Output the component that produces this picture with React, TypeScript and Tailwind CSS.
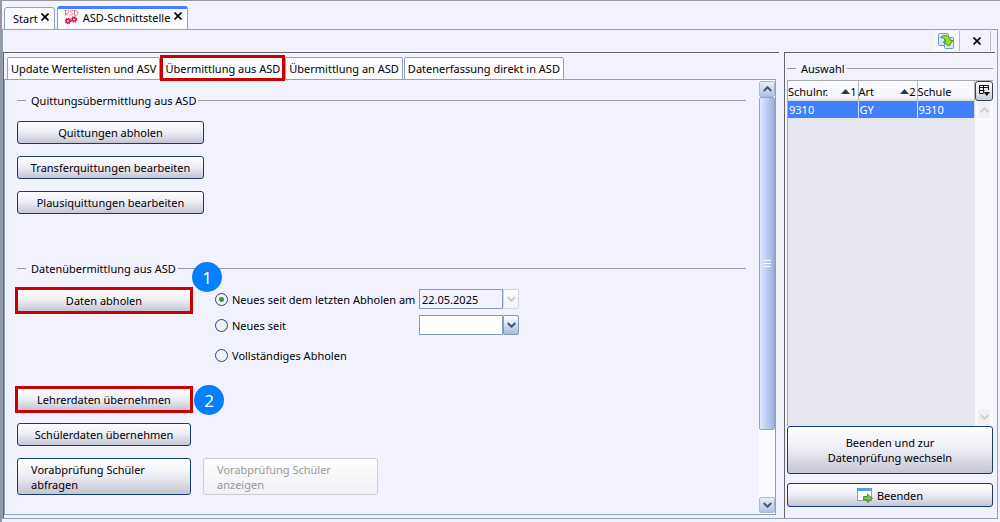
import type { ReactNode } from 'react'
import clsx from 'clsx'

const tabs = ['Update Wertelisten und ASV', 'Übermittlung aus ASD', 'Übermittlung an ASD', 'Datenerfassung direkt in ASD']

const columns = [
  { label: 'Schulnr.', sort: '1' },
  { label: 'Art', sort: '2' },
  { label: 'Schule', sort: '' },
]

const rows = [['9310', 'GY', '9310']]

function AsdIcon() {
  return (
    <svg width="15" height="15" viewBox="0 0 15 15" fill="none" stroke="#de6c8c">
      <path d="M.5.5c3-.5 5 0 4 2S2 3.500 1.500 3.500L4 5.500M1.500.5v5M9 .8C6.500-.2 5.500 1.800 7.500 2.500S9 5.500 5.500 5M10.500.8v4.500M9.500.5c6-.5 6 4.500 1 5.500" strokeWidth="0.9" />
      <g stroke="#c8174c">
        <circle cx="4" cy="11" r="1.700" strokeWidth="1.500" />
        <circle cx="4" cy="11" r="2.700" strokeWidth="1.300" strokeDasharray="1.200 0.920" />
        <circle cx="10" cy="9.500" r="1.700" strokeWidth="1.500" />
        <circle cx="10" cy="9.500" r="2.700" strokeWidth="1.300" strokeDasharray="1.200 0.920" />
      </g>
    </svg>
  )
}

function SwitchIcon() {
  return (
    <svg width="16" height="16" viewBox="0 0 16 16">
      <rect x="0.5" y="0.5" width="10" height="12" rx="1" fill="#d8e8fa" stroke="#6d9bd1" />
      <rect x="6.5" y="4.5" width="9" height="11" rx="1" fill="#d8e8fa" stroke="#6d9bd1" />
      <path d="M2.500 4.500C6 1 12 2 12.500 7.500H15L10.800 13 5 9h2.800C7.800 6 6 4.800 2.500 4.500z" fill="#9be01e" stroke="#3f9413" strokeWidth="0.9" />
    </svg>
  )
}

function ExitIcon() {
  return (
    <svg width="16" height="16" viewBox="0 0 16 16">
      <rect x="0.5" y="1.5" width="14" height="12" fill="#fbfdff" stroke="#7f9fc8" />
      <rect x="0" y="1" width="15" height="3" fill="#5f9be3" />
      <path d="M6.500 9.500h4V7l5 4.500-5 4v-2.500h-4z" fill="#79bd55" stroke="#3f8a2a" strokeWidth="0.9" />
    </svg>
  )
}

function ColumnIcon() {
  return (
    <svg width="11" height="12" viewBox="0 0 11 12" fill="none" stroke="#111">
      <path d="M4 8.500H.5v-8h9V5M.5 2.500h9M4.500.5v8M.5 5.500h5" />
      <path d="M4.500 7h6.500L7.800 11z" fill="#111" stroke="none" />
    </svg>
  )
}

function CrossIcon({ className }: { className?: string }) {
  return (
    <svg width="8" height="8" viewBox="0 0 8 8" stroke="#000" strokeWidth="1.7" className={className}>
      <path d="M.5.5l7 7M7.500.5l-7 7" />
    </svg>
  )
}

function Chevron({ up }: { up?: boolean }) {
  return (
    <svg width="9" height="6" viewBox="0 0 9 6" fill="none" stroke="currentColor" strokeWidth="2">
      <path d={up ? 'M.7 5 4.500 1.300 8.300 5' : 'M.7 1 4.500 4.700 8.300 1'} />
    </svg>
  )
}

function SectionTitle({ children }: { children: ReactNode }) {
  return (
    <h2 className="flex h-[18px] items-center whitespace-nowrap">
      <span className="mr-[5px] h-px w-[9px] bg-[#999]" />
      {children}
      <span className="ml-0.5 h-px flex-1 bg-[#999]" />
    </h2>
  )
}

type ButtonProps = { children: ReactNode; className?: string; marked?: boolean; disabled?: boolean }

function Button({ children, className, marked, disabled }: ButtonProps) {
  return (
    <button
      disabled={disabled}
      className={clsx(
        'flex items-center border bg-linear-to-b',
        disabled ? 'border-[#cdcdd6] from-white to-[#efeff5] text-[#999]' : 'border-[#173a70] from-white via-[#ececf5] to-[#c5c5d3]',
        marked ? 'outline-3 -outline-offset-1 outline-[#c80000]' : 'rounded-[3px]',
        className,
      )}
    >
      {children}
    </button>
  )
}

function Badge({ children, className }: { children: ReactNode; className: string }) {
  return (
    <span className={clsx('absolute flex size-[30px] items-center justify-center rounded-full bg-[#0080ff] text-[17px] text-white', className)}>
      {children}
    </span>
  )
}

function DateField({ label, value, disabled }: { label: string; value: string; disabled?: boolean }) {
  return (
    <div className="flex h-5">
      <input
        aria-label={label}
        defaultValue={value}
        disabled={disabled}
        className="w-[84px] border border-[#7f9db9] bg-white px-0.5 disabled:bg-[#f2f2ff]"
      />
      <button
        aria-label="Kalender"
        disabled={disabled}
        className="flex w-4 items-center justify-center rounded-[2px] border border-[#7f9db9] bg-linear-to-b from-white to-[#a9b9de] text-[#3c5480] disabled:border-[#d5d5e0] disabled:to-[#f2f2f8] disabled:text-[#ccccd4]"
      >
        <Chevron />
      </button>
    </div>
  )
}

function Choice({ label, checked }: { label: string; checked?: boolean }) {
  return (
    <label className="flex w-[204px] items-center gap-1 whitespace-nowrap">
      <input
        type="radio"
        name="zeitraum"
        defaultChecked={checked}
        className="size-[13px] shrink-0 appearance-none rounded-full border border-[#23457a] bg-[#f1f1f4] checked:bg-[radial-gradient(circle,#2ca02c_0_2px,#f1f1f4_3px)]"
      />
      {label}
    </label>
  )
}

function TransferPane() {
  return (
    <div className="min-w-0 flex-1 pt-[11px] pr-[13px] pb-[18px] pl-3">
      <SectionTitle>Quittungsübermittlung aus ASD</SectionTitle>
      <div className="mt-3 flex w-[187px] flex-col gap-3">
        <Button className="h-[23px] justify-center">Quittungen abholen</Button>
        <Button className="h-[23px] justify-center">Transferquittungen bearbeiten</Button>
        <Button className="h-[23px] justify-center">Plausiquittungen bearbeiten</Button>
      </div>

      <div className="mt-[45px]">
        <SectionTitle>Datenübermittlung aus ASD</SectionTitle>
      </div>
      <div className="mt-3 flex items-start gap-6">
        <div className="relative">
          <Button marked className="h-[23px] w-[174px] justify-center">Daten abholen</Button>
          <Badge className="-top-[27px] left-[175px]">1</Badge>
        </div>
        <div className="flex flex-col">
          <div className="flex h-5">
            <Choice label="Neues seit dem letzten Abholen am" checked />
            <DateField label="Letztes Abholen" value="22.05.2025" disabled />
          </div>
          <div className="mt-1.5 flex h-5">
            <Choice label="Neues seit" />
            <DateField label="Neues seit Datum" value="" />
          </div>
          <div className="mt-2.5 flex h-5">
            <Choice label="Vollständiges Abholen" />
          </div>
        </div>
      </div>

      <div className="mt-[23px] flex flex-col items-start gap-3">
        <div className="relative">
          <Button marked className="h-[23px] w-[174px] justify-center">Lehrerdaten übernehmen</Button>
          <Badge className="-top-[3px] left-[177px]">2</Badge>
        </div>
        <Button className="h-[23px] w-[174px] justify-center">Schülerdaten übernehmen</Button>
        <div className="flex gap-3">
          <Button className="h-[37px] w-[174px] px-[13px] text-left">Vorabprüfung Schüler<br />abfragen</Button>
          <Button disabled className="h-[37px] w-[175px] px-[13px] text-left">Vorabprüfung Schüler<br />anzeigen</Button>
        </div>
      </div>
    </div>
  )
}

function ScrollBar() {
  const arrow = 'flex h-4 items-center justify-center rounded-[2px] border border-[#a8b8d8] bg-linear-to-b from-[#e8effc] to-[#b4c3e4] text-[#44557c]'
  return (
    <div className="flex w-4 shrink-0 flex-col bg-[#fcfcff] py-px">
      <button aria-label="Nach oben" className={arrow}><Chevron up /></button>
      <div className="flex flex-[333] flex-col items-center justify-center gap-0.5 rounded-[2px] border border-[#8fa4cb] bg-linear-to-r from-[#e0eaff] via-[#bccdf4] to-[#9fb1dc]">
        <span className="h-px w-[7px] bg-white" />
        <span className="h-px w-[7px] bg-white" />
        <span className="h-px w-[7px] bg-white" />
      </div>
      <div className="flex-[67]" />
      <button aria-label="Nach unten" className={arrow}><Chevron /></button>
    </div>
  )
}

function Selection() {
  return (
    <aside className="flex w-[211px] shrink-0 flex-col border-t border-l border-[#666] px-0.5 pt-1.5">
      <SectionTitle>Auswahl</SectionTitle>
      <div className="mt-[3px] flex flex-1 border-t border-l border-[#aaa]">
        <div className="flex-1 bg-[#e6e6f0]">
          <table className="w-full table-fixed border-collapse">
            <colgroup>
              <col className="w-[70px]" />
              <col className="w-[59px]" />
              <col />
            </colgroup>
            <thead>
              <tr className="h-5 bg-linear-to-b from-[#f8f8ff] from-80% to-[#d8d8e2]">
                {columns.map((column) => (
                  <th key={column.label} className="border-r border-[#b4b4bc] p-0 font-normal">
                    <div className="flex items-center justify-between pr-px">
                      {column.label}
                      {column.sort && (
                        <span className="flex items-center">
                          <svg width="9" height="5" viewBox="0 0 9 5" fill="#243c50"><path d="M0 5 4.500 0 9 5z" /></svg>
                          {column.sort}
                        </span>
                      )}
                    </div>
                  </th>
                ))}
              </tr>
            </thead>
            <tbody>
              {rows.map((row, i) => (
                <tr key={i} className="h-[17px] bg-[#4080ff] text-white">
                  {row.map((cell, j) => (
                    <td key={j} className="border-r border-[#d0dcff] px-px py-0">{cell}</td>
                  ))}
                </tr>
              ))}
            </tbody>
          </table>
        </div>
        <div className="flex w-[18px] flex-col">
          <button aria-label="Spalten" className="flex h-5 items-center justify-center rounded-[3px] border border-[#33425c] bg-linear-to-b from-white to-[#ccccd8]">
            <ColumnIcon />
          </button>
          <div className="flex flex-1 flex-col items-center justify-between bg-[#f8f8fd] px-0.5 py-px text-[#ccccd0]">
            <span className="flex h-4 w-3 items-center justify-center bg-[#f0f0f2]"><Chevron up /></span>
            <span className="flex h-4 w-3 items-center justify-center bg-[#f0f0f2]"><Chevron /></span>
          </div>
        </div>
      </div>
      <Button className="h-12 justify-center">Beenden und zur<br />Datenprüfung wechseln</Button>
      <Button className="mt-[9px] mb-[11px] h-6 justify-center gap-1"><ExitIcon />Beenden</Button>
    </aside>
  )
}

export default function App() {
  return (
    <div className="flex min-h-screen flex-col border-t border-l-2 border-[#999] bg-[#f2f2ff] pt-[5px] pr-0.5 pb-[3px] font-['Noto_Sans',sans-serif] text-[11px] leading-[15px] text-black">
      <nav className="-mb-px flex items-end gap-0.5 pl-0.5">
        <button className="flex h-[23px] items-center gap-[3px] rounded-t-[3px] border border-[#8fa2bd] bg-[#fcfcff] pr-[5px] pl-2">
          Start <CrossIcon className="mb-1" />
        </button>
        <button className="flex h-6 items-center gap-1 rounded-t-[3px] border border-t-3 border-b-0 border-[#8fa2bd] border-t-[#4080ff] bg-[#fcfcff] pr-[5px] pb-1 pl-1.5">
          <AsdIcon /> ASD-Schnittstelle <CrossIcon className="mb-1" />
        </button>
      </nav>

      <div className="flex flex-1 flex-col border border-[#8fa2bd]">
        <header className="flex h-[22px] items-center justify-end pr-1.5">
          <button aria-label="Wechseln" className="flex h-5 w-[26px] items-center justify-center border-r border-[#b8b8c0] bg-[#f8f8ff] pr-0.5"><SwitchIcon /></button>
          <button aria-label="Schließen" className="flex h-5 w-[31px] items-center justify-center border-r border-[#b8b8c0] pl-1">
            <CrossIcon />
          </button>
        </header>

        <div className="flex flex-1 gap-[5px] pr-0.5">
          <main className="flex min-w-0 flex-1 flex-col border-t border-l border-[#666] pt-[3px] pr-[3px] pb-[3px]">
            <div role="tablist" className="-mb-px flex items-end gap-px pl-[3px]">
              {tabs.map((tab, i) => (
                <button
                  key={tab}
                  role="tab"
                  aria-selected={i === 1}
                  className={clsx(
                    'border border-[#8fa2bd] bg-[#fcfcff] px-[3px] whitespace-nowrap',
                    i === 1 ? 'z-10 h-6 outline-3 -outline-offset-2 outline-[#c80000]' : 'h-[23px] rounded-t-[2px]',
                  )}
                >
                  {tab}
                </button>
              ))}
            </div>
            <div className="flex flex-1 border border-[#8fa2bd]">
              <TransferPane />
              <ScrollBar />
            </div>
          </main>
          <Selection />
        </div>
      </div>
    </div>
  )
}
